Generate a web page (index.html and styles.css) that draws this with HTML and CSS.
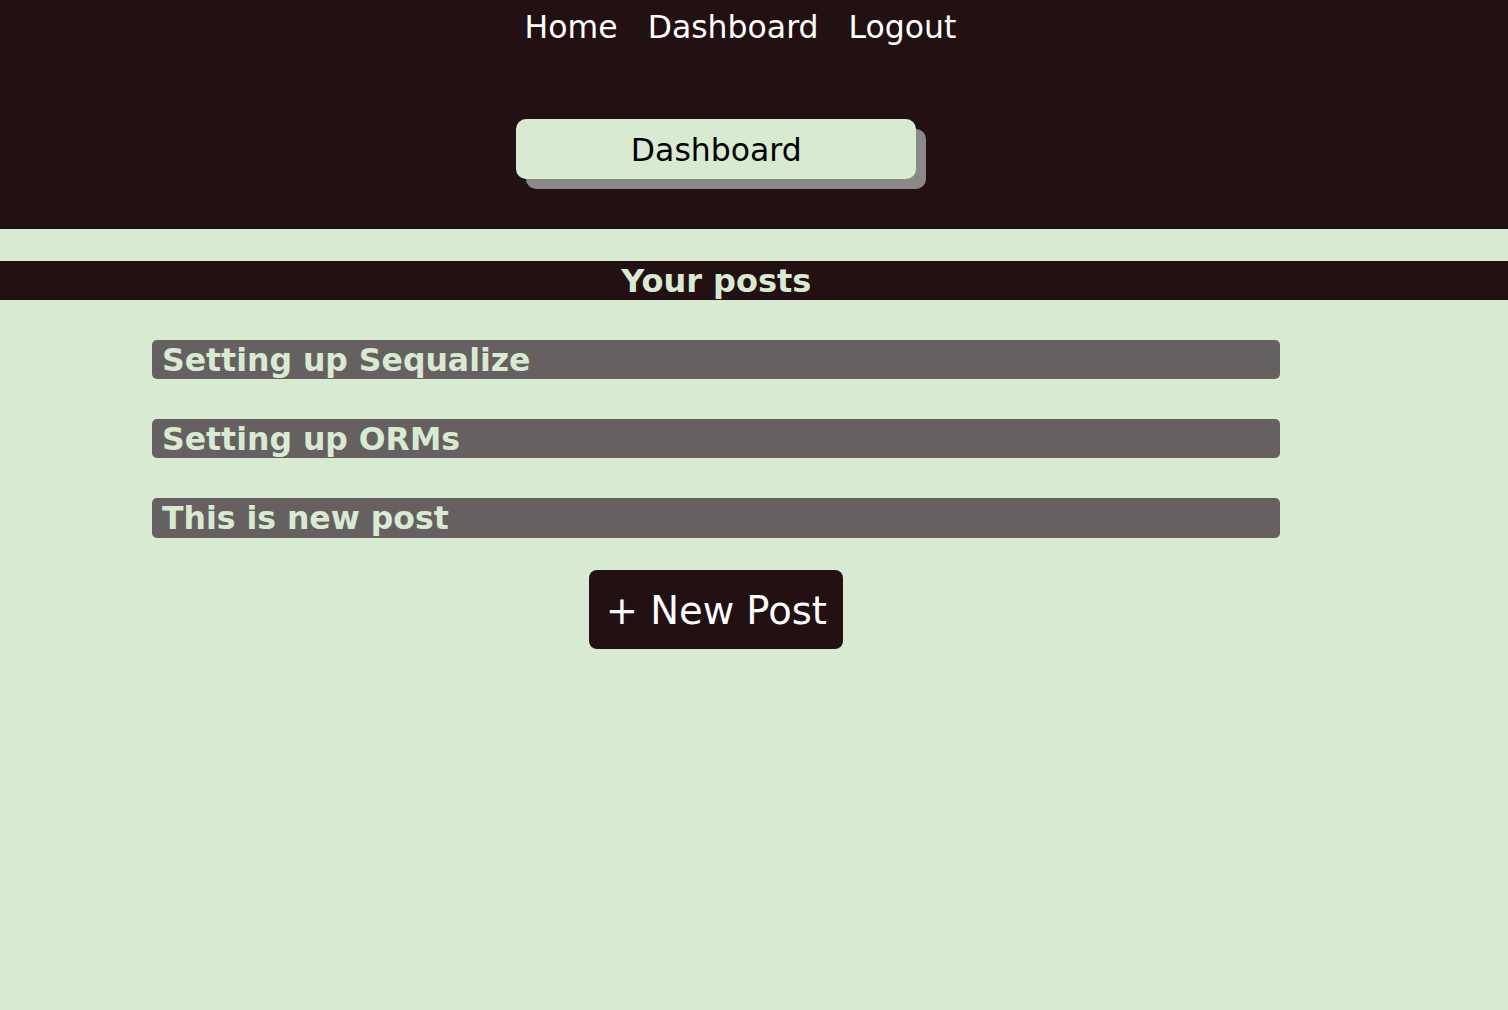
FILE: index.html
```html
<!DOCTYPE html>
<html>
<head>
<meta charset="utf-8">
<title>Dashboard</title>
<link rel="stylesheet" href="styles.css">
</head>
<body>
<header class="site-header">
  <nav class="nav">
    <a class="nav-link" href="#">Home</a>
    <a class="nav-link" href="#">Dashboard</a>
    <a class="nav-link" href="#">Logout</a>
  </nav>
  <div class="page-title-wrap">
    <h1 class="page-title">Dashboard</h1>
  </div>
</header>
<main class="main">
  <h2 class="section-title"><span class="section-title-text">Your posts</span></h2>
  <div class="content">
    <ul class="post-list">
      <li class="post">Setting up Sequalize</li>
      <li class="post">Setting up ORMs</li>
      <li class="post post-last">This is new post</li>
    </ul>
    <div class="actions">
      <button class="new-post">+ New Post</button>
    </div>
  </div>
</main>
</body>
</html>
```

FILE: styles.css
```css
html, body {
  margin: 0;
  padding: 0;
}

body {
  background: #d9ead3;
  font-family: "DejaVu Sans", Verdana, sans-serif;
  min-height: 1010px;
}

.site-header {
  background: #231012;
  height: 229px;
  box-sizing: border-box;
  padding-top: 9px;
}

.nav {
  display: flex;
  justify-content: center;
  gap: 30px;
  padding-right: 27px;
}

.nav-link {
  color: #ffffff;
  text-decoration: none;
  font-size: 31.5px;
  line-height: 37px;
}

.page-title-wrap {
  width: 95%;
  display: flex;
  justify-content: center;
  margin-top: 73px;
}

.page-title {
  margin: 0;
  width: 400px;
  height: 60px;
  box-sizing: border-box;
  background: #d9ead3;
  color: #000000;
  border-radius: 10px;
  box-shadow: 10px 10px 0 #8b8888;
  font-size: 31.5px;
  font-weight: normal;
  line-height: 62px;
  text-align: center;
}

.main {
  padding-top: 32px;
}

.section-title {
  margin: 0;
  background: #231012;
  height: 39px;
}

.section-title-text {
  display: block;
  width: 95%;
  text-align: center;
  color: #d9ead3;
  font-size: 32px;
  font-weight: bold;
  line-height: 41px;
}

.content {
  width: 95%;
}

.post-list {
  list-style: none;
  margin: 40px 0 0 152px;
  padding: 0;
  width: 1128px;
  display: flex;
  flex-direction: column;
  gap: 40px;
}

.post {
  background: #666160;
  color: #d9ead3;
  border-radius: 5px;
  font-size: 31.5px;
  font-weight: bold;
  line-height: 41px;
  height: 39px;
  padding-left: 10px;
  overflow: hidden;
}

.post-last {
  height: 40px;
}

.actions {
  display: flex;
  justify-content: center;
  margin-top: 32px;
}

.new-post {
  background: #231012;
  color: #ffffff;
  border: none;
  border-radius: 8px;
  font-family: "DejaVu Sans", Verdana, sans-serif;
  font-size: 38.5px;
  width: 254px;
  height: 79px;
  padding: 0;
  padding-top: 2px;
  cursor: pointer;
}
```
